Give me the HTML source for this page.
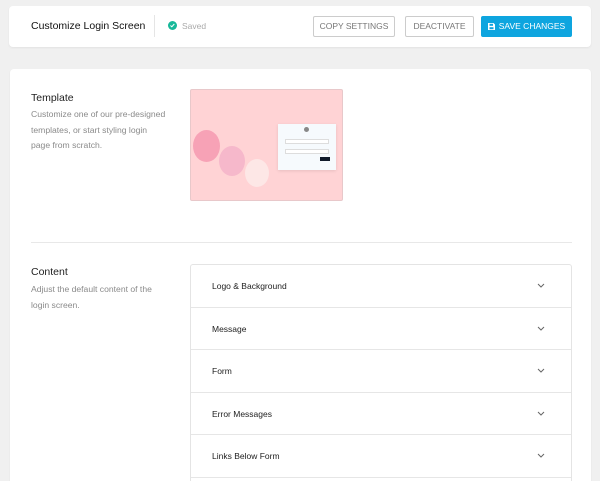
<!DOCTYPE html>
<html><head><style>
*{margin:0;padding:0;box-sizing:border-box}
html,body{width:600px;height:481px;overflow:hidden}
body{background:#f0f0f0;font-family:"Liberation Sans",sans-serif;position:relative}
.a{position:absolute}
.card{background:#fff;border-radius:4px;box-shadow:0 1px 2px rgba(0,0,0,.06)}
.btn{position:absolute;top:16px;height:21px;border:1px solid #ccc;border-radius:2px;font-size:8.5px;color:#777;text-align:center;line-height:19px;background:#fff}
.h{font-size:10.5px;color:#222}
.p{font-size:8.6px;color:#8a8a8a;line-height:15.5px}
.row{position:absolute;left:0;width:100%;height:42.5px;border-bottom:1px solid #e6e6e6;font-size:8.5px;color:#222;padding-left:21px;line-height:42px}
.row svg{position:absolute;right:26px;top:18px}
</style></head><body>
<div class="a card" style="left:9px;top:6px;width:582px;height:41px"></div>
<div class="a" style="left:31px;top:20px;font-size:10.5px;color:#111">Customize Login Screen</div>
<div class="a" style="left:154px;top:15px;width:1px;height:22px;background:#e5e5e5"></div>
<div class="a" style="left:168px;top:21px;width:9px;height:9px;border-radius:50%;background:#17b899"></div>
<svg class="a" style="left:170px;top:23px" width="5" height="5" viewBox="0 0 5 5"><path d="M0.5 2.5l1.3 1.3L4.3 1" stroke="#fff" stroke-width="1" fill="none"/></svg>
<div class="a" style="left:182px;top:21px;font-size:8.5px;color:#aaa">Saved</div>
<div class="btn" style="left:313px;width:82px">COPY SETTINGS</div>
<div class="btn" style="left:405px;width:69px">DEACTIVATE</div>
<div class="btn" style="left:481px;width:91px;background:#0ea5df;border-color:#0ea5df;color:#fff"><svg width="7" height="7" viewBox="0 0 7 7" style="vertical-align:-1px;margin-right:4px"><path d="M0 0h5.5L7 1.5V7H0z" fill="#fff"/><rect x="1.5" y="0.8" width="3.5" height="2" fill="#0ea5df"/><rect x="1.5" y="4.2" width="4" height="2" fill="#0ea5df"/></svg>SAVE CHANGES</div>

<div class="a card" style="left:10px;top:69px;width:581px;height:420px"></div>
<div class="a h" style="left:31px;top:92px">Template</div>
<div class="a p" style="left:31px;top:107px;width:137px">Customize one of our pre-designed templates, or start styling login page from scratch.</div>
<div class="a" style="left:190px;top:89px;width:153px;height:112px;background:#ffd3d5;border:1px solid #e8c8ca;border-radius:2px;overflow:hidden">
 <div class="a" style="left:2px;top:40px;width:27px;height:32px;border-radius:50%;background:#f7a2b6"></div>
 <div class="a" style="left:28px;top:56px;width:26px;height:30px;border-radius:50%;background:#f6b8cb"></div>
 <div class="a" style="left:54px;top:69px;width:24px;height:28px;border-radius:50%;background:#fde7e6"></div>
 <div class="a" style="left:87px;top:34px;width:58px;height:46px;background:#f6fafd;box-shadow:0 1px 3px rgba(0,0,0,.1)">
  <div class="a" style="left:26px;top:3px;width:5px;height:5px;border-radius:50%;background:#888"></div>
  <div class="a" style="left:7px;top:15px;width:44px;height:5px;border:1px solid #ddd;background:#fff"></div>
  <div class="a" style="left:7px;top:25px;width:44px;height:5px;border:1px solid #ddd;background:#fff"></div>
  <div class="a" style="left:42px;top:33px;width:10px;height:4px;background:#111a2a"></div>
 </div>
</div>
<div class="a" style="left:31px;top:242px;width:541px;height:1px;background:#e8e8e8"></div>
<div class="a h" style="left:31px;top:266px">Content</div>
<div class="a p" style="left:31px;top:282px;width:137px">Adjust the default content of the login screen.</div>
<div class="a" style="left:190px;top:264px;width:382px;height:230px;border:1px solid #e4e4e4;border-radius:3px;background:#fff">
 <div class="row" style="top:0">Logo &amp; Background<svg width="8" height="5" viewBox="0 0 8 5"><path d="M1 1l3 3 3-3" stroke="#666" fill="none"/></svg></div>
 <div class="row" style="top:42.5px">Message<svg width="8" height="5" viewBox="0 0 8 5"><path d="M1 1l3 3 3-3" stroke="#666" fill="none"/></svg></div>
 <div class="row" style="top:85px">Form<svg width="8" height="5" viewBox="0 0 8 5"><path d="M1 1l3 3 3-3" stroke="#666" fill="none"/></svg></div>
 <div class="row" style="top:127.5px">Error Messages<svg width="8" height="5" viewBox="0 0 8 5"><path d="M1 1l3 3 3-3" stroke="#666" fill="none"/></svg></div>
 <div class="row" style="top:170px">Links Below Form<svg width="8" height="5" viewBox="0 0 8 5"><path d="M1 1l3 3 3-3" stroke="#666" fill="none"/></svg></div>
</div>
</body></html>
